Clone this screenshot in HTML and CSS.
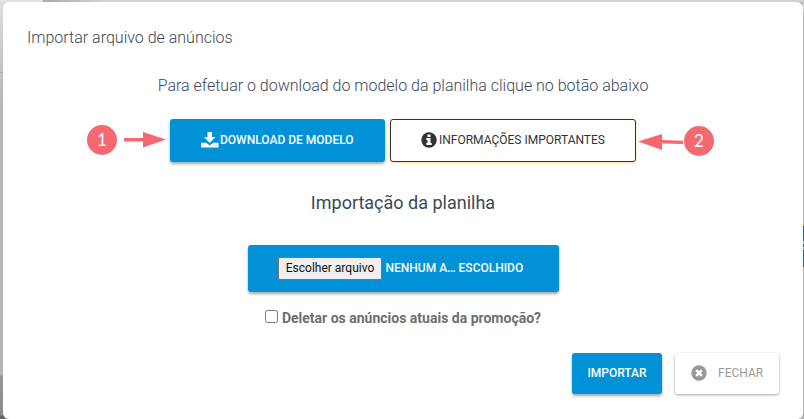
FILE: index.html
```html
<!DOCTYPE html>
<html lang="pt-BR">
<head>
    <meta charset="UTF-8">
    <title>Importar arquivo de anúncios</title>
    <link rel="stylesheet" href="styles.css">
</head>
<body>
<div class="modal">
    <h4 class="title">Importar arquivo de anúncios</h4>
    <p class="intro">Para efetuar o download do modelo da planilha clique no botão abaixo</p>
    <div class="actions">
        <span class="step">1</span>
        <svg class="arrow" width="43" height="16" viewBox="0 0 43 16">
            <path d="M0 6h19V0l23 7.500-23 8V9.500H0z" fill="#f4696f"/>
        </svg>
        <button class="btn btn-primary btn-download">
            <svg width="18" height="16" viewBox="0 0 18 16" fill="#fff">
                <path d="M6.500 0h4.500v5h3.500L8.750 11 3 5h3.500z"/>
                <path d="M0 10.700h5.200L8.750 13.500l3.550-2.800H17.500V15.500H0z"/>
                <path d="M12.300 13.200h1.100v1h-1.100zM14.800 13.200h1.100v1h-1.100z" fill="#7fc4ea"/>
            </svg>
            <span>DOWNLOAD DE MODELO</span>
        </button>
        <button class="btn btn-info">
            <svg width="16" height="16" viewBox="0 0 16 16">
                <circle cx="8" cy="8" r="7.700" fill="#333"/>
                <path d="M6.500 2.500h3v2.500h-3zM5.300 6h4.200v5h1.200v2H5.300v-2h1.200V8H5.300z" fill="#fff"/>
            </svg>
            <span>INFORMAÇÕES IMPORTANTES</span>
        </button>
        <svg class="arrow arrow-left" width="45" height="16" viewBox="0 0 45 16">
            <path d="M0 7.500L24 0v6l21 .700v3.300L24 9.500V16z" fill="#f4696f"/>
        </svg>
        <span class="step step-two">2</span>
    </div>
    <h3 class="subtitle">Importação da planilha</h3>
    <div class="btn btn-primary file">
        <span class="file-button">Escolher arquivo</span>
        <span class="file-name">NENHUM A… ESCOLHIDO</span>
    </div>
    <label class="check">
        <input type="checkbox">
        <span>Deletar os anúncios atuais da promoção?</span>
    </label>
    <div class="footer">
        <button class="btn btn-primary btn-import">IMPORTAR</button>
        <button class="btn btn-close">
            <svg width="16" height="16" viewBox="0 0 16 16">
                <circle cx="8" cy="8" r="7.700" fill="#999"/>
                <path d="M5.200 5.200l5.600 5.600M10.800 5.200l-5.600 5.600" stroke="#fff" stroke-width="2.600"/>
            </svg>
            <span>FECHAR</span>
        </button>
    </div>
</div>
</body>
</html>
```

FILE: styles.css
```css
*{
    box-sizing: border-box;
    margin:0;
    padding:0;
}
body{
    height:419px;
    padding:2px 1px 0 3px;
    overflow: hidden;
    font-family: Roboto, "Liberation Sans", sans-serif;
    color:#3c4858;
    /* edges of the dimmed page behind the modal */
    background:
        linear-gradient(#176a99, #176a99) 803px 226px / 1px 15px no-repeat,
        linear-gradient(#176a99, #176a99) 803px 244px / 1px 3px no-repeat,
        linear-gradient(#176a99, #176a99) 803px 250px / 1px 17px no-repeat,
        linear-gradient(#aaa, #aaa) 0 72px / 3px 1px no-repeat,
        linear-gradient(#e2e2e2, #e2e2e2) 0 0 / 43px 2px no-repeat,
        linear-gradient(90deg, #a8a8a8, #d2d2d2 60px) 43px 0 / 761px 2px no-repeat,
        linear-gradient(#d2d2d2, #d2d2d2) 803px 0 / 1px 12px no-repeat,
        linear-gradient(#dedede, #b8b8b8 100px, #b4b4b4 375px, #969696 376px, #8a8a8a 415px, #666 416px) 0 0 / 10px 100% no-repeat,
        #b4b4b4;
}
.modal{
    display: flex;
    flex-direction: column;
    align-items: center;
    height:417px;
    border-radius:6px;
    background:#fff;
}
.title,.intro{
    font-size: 16px;
    font-weight: 300;
    line-height: 24px;
}
.title{
    align-self: flex-start;
    margin:24px 0 0 24px;
}
.intro{
    margin-top:24px;
}
.actions{
    display: flex;
    align-items: center;
    align-self: flex-start;
    margin:21px 0 0 84px;
}
.step{
    width:30px;
    height:30px;
    margin-top:-2px;
    border-radius:50%;
    background:#f4696f;
    color:#fff;
    font-family: Lato, sans-serif;
    font-size: 17px;
    line-height: 29px;
    text-align: center;
}
.step-two{
    margin:0 0 0 1px;
}
.arrow{
    margin:-1px 3px 0 7px;
}
.arrow-left{
    margin:3px 0 0 2px;
}
.btn{
    display: flex;
    align-items: center;
    border:0;
    border-radius:3px;
    font-family: inherit;
    font-size: 12px;
    white-space: nowrap;
}
.btn-primary{
    background:#0091d7;
    color:#fff;
    font-weight: 500;
    box-shadow: 0 2px 3px rgba(0,0,0,.35);
}
.btn-download{
    width:215px;
    height:43px;
    padding:0 0 2px 31px;
    gap:1px;
}
.btn-info{
    width:246px;
    height:43px;
    margin-left:5px;
    padding:0 0 2px 30px;
    gap:2px;
    border:1px solid #333;
    background:#fff;
    color:#333;
    box-shadow: 0 1px 3px rgba(255,152,0,.4);
}
.subtitle{
    margin-top:28px;
    font-size: 18px;
    font-weight: 400;
    line-height: 26px;
}
.file{
    width:311px;
    height:47px;
    margin-top:29px;
    padding-left:30px;
    gap:4px;
}
.file-button{
    width:104px;
    height:23px;
    padding-left:1px;
    border:1px solid #767676;
    border-radius:2px;
    background:#efefef;
    color:#111;
    font-weight: 400;
    line-height: 21px;
    text-align: center;
}
.file-name{
    margin-top:-1px;
}
.check{
    display: flex;
    align-items: center;
    margin-top:16px;
    gap:4px;
    color:#6e6e6e;
    font-size: 14px;
    font-weight: 700;
    line-height: 20px;
}
.check input{
    width:13px;
    height:13px;
    margin-top:-3px;
}
.footer{
    display: flex;
    align-self: flex-end;
    margin:25px 24px 0 0;
    gap:13px;
}
.btn-import{
    justify-content: center;
    width:90px;
    height:41px;
    padding-bottom:1px;
}
.btn-close{
    width:104px;
    height:41px;
    padding:0 0 1px 16px;
    gap:11px;
    background:#fff;
    color:#999;
    box-shadow: 0 1px 3px rgba(0,0,0,.35);
}
```
